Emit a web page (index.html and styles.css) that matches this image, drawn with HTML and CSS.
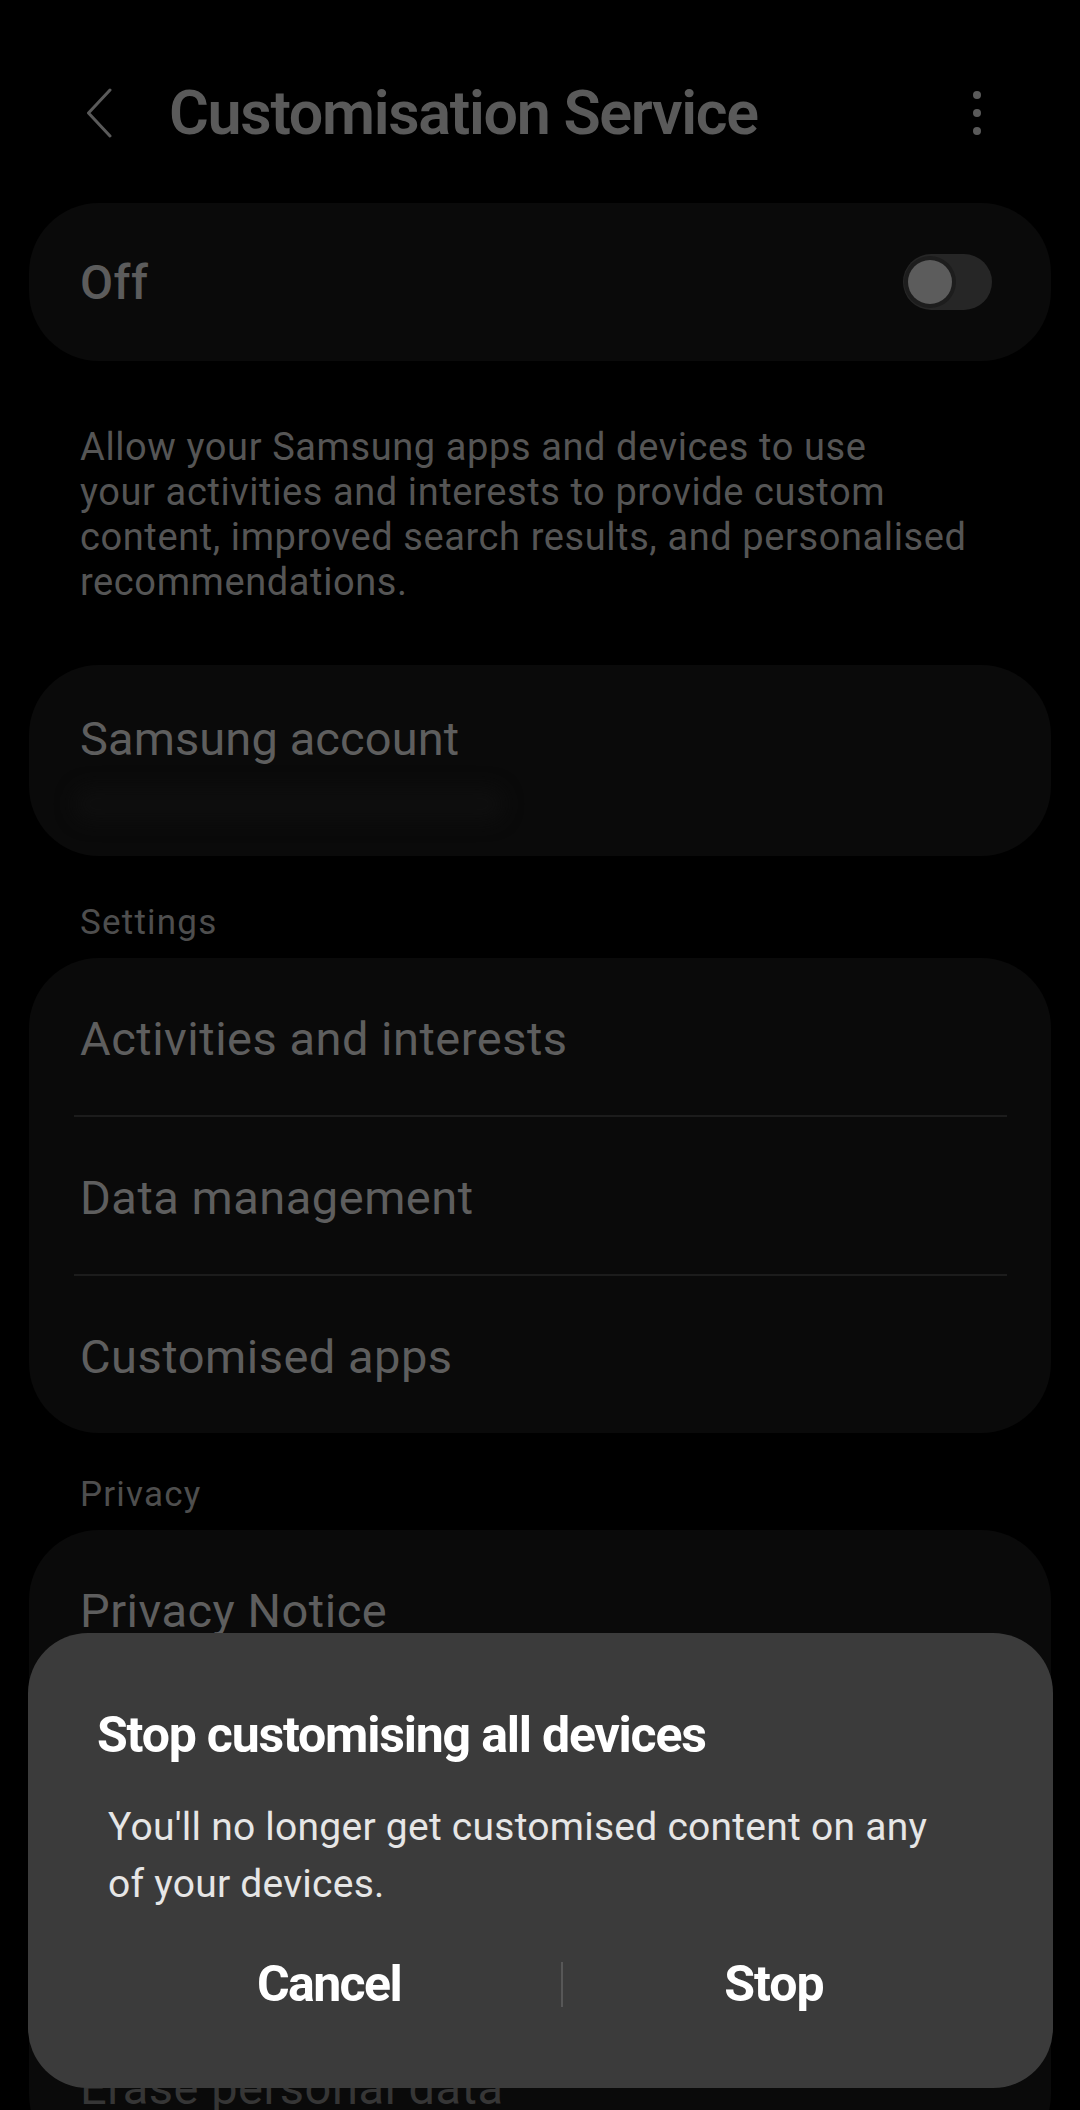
FILE: index.html
```html
<!DOCTYPE html>
<html lang="en">
<head>
<meta charset="utf-8">
<title>Customisation Service</title>
<link rel="stylesheet" href="styles.css">
</head>
<body>
<header class="appbar">
  <svg class="back" width="26" height="50" viewBox="0 0 26 50"><polyline points="24,2 2.5,25 24,48" fill="none" stroke="#5a5a5a" stroke-width="3" stroke-linecap="round" stroke-linejoin="round"/></svg>
  <h1 class="title">Customisation Service</h1>
  <div class="more"><span class="dot"></span><span class="dot"></span><span class="dot"></span></div>
</header>

<section class="card switch-card">
  <span class="off">Off</span>
  <span class="switch"><span class="knob"></span></span>
</section>

<p class="desc">Allow your Samsung apps and devices to use<br>your activities and interests to provide custom<br>content, improved search results, and personalised<br>recommendations.</p>

<section class="card account">
  <div class="item-label">Samsung account</div>
  <div class="blurred"></div>
</section>

<h2 class="section">Settings</h2>
<section class="card list">
  <div class="row">Activities and interests</div>
  <div class="divider"></div>
  <div class="row">Data management</div>
  <div class="divider"></div>
  <div class="row">Customised apps</div>
</section>

<h2 class="section section-privacy">Privacy</h2>
<section class="card list">
  <div class="row">Privacy Notice</div>
  <div class="divider"></div>
  <div class="row"></div>
  <div class="divider"></div>
  <div class="row"></div>
  <div class="divider"></div>
  <div class="row row-dim">Erase personal data</div>
</section>

<div class="dialog">
  <div class="dlg-title">Stop customising all devices</div>
  <div class="dlg-body">You'll no longer get customised content on any<br>of your devices.</div>
  <div class="dlg-actions">
    <div class="btn btn-cancel">Cancel</div>
    <div class="sep"></div>
    <div class="btn btn-stop">Stop</div>
  </div>
</div>
</body>
</html>
```

FILE: styles.css
```css
html, body {
  margin: 0;
  padding: 0;
}
body {
  background: #000;
  font-family: Roboto, "Liberation Sans", sans-serif;
  width: 1080px;
  height: 2110px;
  overflow: hidden;
  position: relative;
}

.appbar {
  display: flex;
  align-items: center;
  height: 110px;
  margin: 58px 0 35px;
  padding: 0 99px 0 86px;
}
.back { flex: none; display: block; }
.title {
  margin: 0 0 0 57px;
  font-size: 61px;
  font-weight: 600;
  color: #5a5a5a;
  letter-spacing: -1.3px;
}
.more {
  margin-left: auto;
  display: flex;
  flex-direction: column;
  gap: 10px;
}
.dot {
  width: 8px;
  height: 8px;
  border-radius: 50%;
  background: #5a5a5a;
}

.card {
  margin: 0 29px;
  background: #0a0a0a;
  border-radius: 70px;
}

.switch-card {
  height: 158px;
  display: flex;
  align-items: center;
  padding: 0 59px 0 51px;
}
.off {
  font-size: 48px;
  font-weight: 500;
  color: #5c5c5c;
  letter-spacing: 0.5px;
}
.switch {
  margin-left: auto;
  width: 89px;
  height: 56px;
  box-sizing: border-box;
  border-radius: 28px;
  background: #262626;
  display: flex;
  align-items: center;
  padding-left: 5px;
}
.knob {
  width: 44px;
  height: 44px;
  border-radius: 50%;
  background: #5c5c5c;
  box-shadow: 0 0 0 4px #1d1d1d;
}

.desc {
  margin: 64px 0 0;
  padding: 0 60px 0 80px;
  font-size: 38px;
  line-height: 45px;
  color: #555;
  letter-spacing: 0.6px;
}

.account {
  margin-top: 60px;
  height: 191px;
  box-sizing: border-box;
  padding: 46px 51px 0;
}
.item-label {
  font-size: 47px;
  line-height: 56px;
  color: #5e5e5e;
  letter-spacing: 0.1px;
}
.blurred {
  margin: 20px 0 0 -6px;
  width: 430px;
  height: 34px;
  border-radius: 17px;
  background: #0e0e0e;
  filter: blur(9px);
}

.section {
  margin: 46px 0 14px;
  padding: 0 80px;
  font-size: 35px;
  line-height: 42px;
  font-weight: 400;
  color: #4e4e4e;
  letter-spacing: 1.2px;
}
.section-privacy { margin-top: 41px; }

.list { overflow: hidden; }
.row {
  height: 157px;
  box-sizing: border-box;
  display: flex;
  align-items: center;
  padding: 3px 51px 0;
  font-size: 47px;
  color: #5e5e5e;
  letter-spacing: 0.5px;
}
.row-dim { color: #363636; }
.divider {
  height: 2px;
  margin: 0 44px 0 45px;
  background: #1c1c1c;
}

.dialog {
  position: absolute;
  left: 28px;
  right: 27px;
  bottom: 22px;
  background: #3b3b3b;
  border-radius: 60px;
  padding: 72px 0 74px;
}
.dlg-title {
  padding-left: 69px;
  font-size: 50px;
  line-height: 60px;
  font-weight: 700;
  color: #fff;
  letter-spacing: -1.2px;
}
.dlg-body {
  margin-top: 34px;
  padding: 0 40px 0 80px;
  font-size: 39px;
  line-height: 57px;
  color: #e6e6e6;
  letter-spacing: 0.25px;
}
.dlg-actions {
  margin-top: 41px;
  display: flex;
  align-items: center;
  padding: 0 68px 0 69px;
}
.btn {
  font-size: 50px;
  line-height: 60px;
  font-weight: 700;
  color: #fff;
  text-align: center;
  letter-spacing: -1px;
}
.btn-cancel { width: 464px; letter-spacing: -1.6px; }
.btn-stop { flex: 1; }
.sep {
  width: 2px;
  height: 45px;
  background: #575757;
}
```
